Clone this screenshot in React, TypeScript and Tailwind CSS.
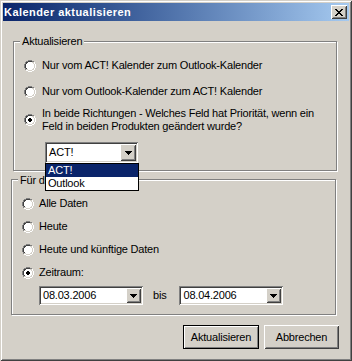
import React from "react";

const RADIO = [
  "....GGGG....",
  "..GGDDDDGG..",
  ".GDDWWWWLLW.",
  ".GDWWWWWWLW.",
  "GDWWWWWWWWLW",
  "GDWWWWWWWWLW",
  "GDWWWWWWWWLW",
  "GDWWWWWWWWLW",
  ".GDWWWWWWLW.",
  ".GLLWWWWLLW.",
  "..WWLLLLWW..",
  "....WWWW....",
];
const DOT = [".XX.", "XXXX", "XXXX", ".XX."];
const COLORS: Record<string, string> = {
  G: "#808080",
  D: "#404040",
  W: "#ffffff",
  L: "#d4d0c8",
  X: "#000000",
};

function Radio({ checked }: { checked?: boolean }) {
  const rects: React.ReactElement[] = [];
  RADIO.forEach((row, y) =>
    row.split("").forEach((ch, x) => {
      if (COLORS[ch])
        rects.push(<rect key={`r${x}-${y}`} x={x} y={y} width={1} height={1} fill={COLORS[ch]} />);
    })
  );
  if (checked)
    DOT.forEach((row, y) =>
      row.split("").forEach((ch, x) => {
        if (ch === "X")
          rects.push(<rect key={`d${x}-${y}`} x={x + 4} y={y + 4} width={1} height={1} fill="#000" />);
      })
    );
  return (
    <svg width={12} height={12} viewBox="0 0 12 12" shapeRendering="crispEdges" className="shrink-0">
      {rects}
    </svg>
  );
}

function Arrow() {
  return (
    <svg width={7} height={4} viewBox="0 0 7 4" shapeRendering="crispEdges">
      <rect x={0} y={0} width={7} height={1} fill="#000" />
      <rect x={1} y={1} width={5} height={1} fill="#000" />
      <rect x={2} y={2} width={3} height={1} fill="#000" />
      <rect x={3} y={3} width={1} height={1} fill="#000" />
    </svg>
  );
}

function CloseGlyph() {
  const rows = ["XX....XX", ".XX..XX.", "..XXXX..", "...XX...", "..XXXX..", ".XX..XX.", "XX....XX"];
  const rects: React.ReactElement[] = [];
  rows.forEach((row, y) =>
    row.split("").forEach((ch, x) => {
      if (ch === "X") rects.push(<rect key={`${x}-${y}`} x={x} y={y} width={1} height={1} fill="#000" />);
    })
  );
  return (
    <svg width={8} height={7} viewBox="0 0 8 7" shapeRendering="crispEdges">
      {rects}
    </svg>
  );
}

const sunken =
  "shadow-[inset_1px_1px_#808080,inset_-1px_-1px_#ffffff,inset_2px_2px_#404040,inset_-2px_-2px_#d4d0c8]";
const raised =
  "shadow-[inset_1px_1px_#ffffff,inset_-1px_-1px_#404040,inset_2px_2px_#d4d0c8,inset_-2px_-2px_#808080]";

function DropButton({ className }: { className: string }) {
  return (
    <div className={`${className} bg-[#d4d0c8] flex items-center justify-center ${raised}`}>
      <Arrow />
    </div>
  );
}

export default function App() {
  return (
    <div className="w-[352px] h-[361px] bg-[#d4d0c8] p-[3px] flex flex-col font-['Liberation_Sans',Arial,sans-serif] text-[11px] leading-[13px] text-black shadow-[inset_1px_1px_#d4d0c8,inset_-1px_-1px_#404040,inset_2px_2px_#ffffff,inset_-2px_-2px_#808080]">
      {/* Title bar */}
      <div className="h-[18px] flex items-center bg-linear-to-r from-[#0a246a] to-[#a6caf0] pl-[1px] pr-[2px]">
        <span className="flex-1 text-white font-bold text-[11px] tracking-[0.45px]">Kalender aktualisieren</span>
        <div className={`w-[16px] h-[14px] bg-[#d4d0c8] flex items-center justify-center ${raised}`}>
          <CloseGlyph />
        </div>
      </div>

      {/* Group 1 */}
      <div className="mt-[20px] ml-[10px] w-[324px] h-[130px] border border-[#808080] shadow-[1px_1px_#ffffff,inset_1px_1px_#ffffff] flex flex-col">
        <span className="self-start -mt-[7px] ml-[6px] px-[2px] bg-[#d4d0c8] tracking-[-0.2px]">Aktualisieren</span>
        <div className="mt-[11px] ml-[10px] h-[13px] flex items-center gap-[6px]">
          <Radio />
          <span className="tracking-[-0.2px]">Nur vom ACT! Kalender zum Outlook-Kalender</span>
        </div>
        <div className="mt-[13px] ml-[10px] h-[13px] flex items-center gap-[6px]">
          <Radio />
          <span className="tracking-[-0.2px]">Nur vom Outlook-Kalender zum ACT! Kalender</span>
        </div>
        <div className="mt-[9px] ml-[10px] h-[26px] flex items-center gap-[6px]">
          <Radio checked />
          <span className="tracking-[-0.2px]">
            In beide Richtungen - Welches Feld hat Priorität, wenn ein
            <br />
            Feld in beiden Produkten geändert wurde?
          </span>
        </div>
        <div className="mt-[9px] ml-[31px] relative self-start">
          <div className={`w-[93px] h-[21px] bg-white p-[2px] flex ${sunken}`}>
            <span className="flex-1 flex items-center pl-[2px] tracking-[-0.2px]">ACT!</span>
            <DropButton className="w-[16px] h-[17px]" />
          </div>
          <div className="absolute left-0 top-full w-[94px] border border-black bg-white z-10 flex flex-col">
            <span className="h-[13px] bg-[#0a246a] text-white pl-[2px] tracking-[-0.2px]">ACT!</span>
            <span className="h-[13px] pl-[2px] tracking-[-0.2px]">Outlook</span>
          </div>
        </div>
      </div>

      {/* Group 2 */}
      <div className="mt-[8px] ml-[8px] w-[325px] h-[136px] border border-[#808080] shadow-[1px_1px_#ffffff,inset_1px_1px_#ffffff] flex flex-col">
        <span className="self-start -mt-[6px] ml-[6px] px-[2px] bg-[#d4d0c8] tracking-[-0.2px]">Für die Daten</span>
        {["Alle Daten", "Heute", "Heute und künftige Daten", "Zeitraum:"].map((t, i) => (
          <div key={t} className="mt-[10px] ml-[10px] h-[13px] flex items-center gap-[5px]">
            <Radio checked={i === 3} />
            <span className="tracking-[-0.2px]">{t}</span>
          </div>
        ))}
        <div className="mt-[7px] ml-[27px] flex items-center">
          <div className={`w-[104px] h-[19px] bg-white p-[2px] flex ${sunken}`}>
            <span className="flex-1 flex items-center pl-[2px] tracking-[-0.2px]">08.03.2006</span>
            <DropButton className="w-[15px] h-[15px]" />
          </div>
          <span className="ml-[10px] tracking-[-0.2px]">bis</span>
          <div className={`ml-[13px] w-[104px] h-[19px] bg-white p-[2px] flex ${sunken}`}>
            <span className="flex-1 flex items-center pl-[2px] tracking-[-0.2px]">08.04.2006</span>
            <DropButton className="w-[15px] h-[15px]" />
          </div>
        </div>
      </div>

      {/* Buttons */}
      <div className="mt-[10px] pr-[10px] flex justify-end gap-[5px]">
        <div className="w-[76px] h-[24px] border border-black bg-[#d4d0c8] flex items-center justify-center shadow-[inset_1px_1px_#ffffff,inset_-1px_-1px_#808080]">
          <span className="tracking-[-0.2px]">Aktualisieren</span>
        </div>
        <div className={`w-[75px] h-[24px] bg-[#d4d0c8] flex items-center justify-center ${raised}`}>
          <span className="tracking-[-0.2px]">Abbrechen</span>
        </div>
      </div>
    </div>
  );
}
